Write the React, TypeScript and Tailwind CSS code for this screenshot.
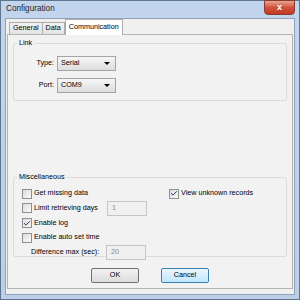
import { Check } from "lucide-react";

function Checkbox({ checked }: { checked?: boolean }) {
  return (
    <span className="flex h-[10px] w-[10px] shrink-0 items-center justify-center border border-[#8e8f8f] bg-gradient-to-br from-[#dcdcdc] to-[#fbfbfb]">
      {checked && <Check className="h-[9px] w-[9px] text-[#1c3a6b]" strokeWidth={3} />}
    </span>
  );
}

function Select({ value }: { value: string }) {
  return (
    <div className="flex h-[15px] w-[59px] items-center justify-between border border-[#a5a5a5] bg-gradient-to-b from-[#f6f6f6] to-[#dddddd] pl-[3px] pr-[5px]">
      <span>{value}</span>
      <span className="h-0 w-0 border-x-[3px] border-t-[3px] border-x-transparent border-t-black" />
    </div>
  );
}

function Field({ value }: { value: string }) {
  return (
    <div className="flex h-[15px] w-[40px] shrink-0 items-center border border-[#c5c5c5] bg-[#f0f0f0] pl-[4px] text-[#8a8a8a]">
      {value}
    </div>
  );
}

export default function App() {
  return (
    <div className="flex h-[300px] w-[300px] flex-col whitespace-nowrap border border-[#5e7591] bg-gradient-to-b from-[#c3d5ec] to-[#bccfe6] font-['Liberation_Sans',sans-serif] text-[7.2px] text-black">
      {/* title bar */}
      <div className="relative flex h-[17px] shrink-0 items-center pl-[5px]">
        <span className="text-[8.2px] text-[#1e1e1e]">Configuration</span>
        <span className="absolute right-[4px] top-[-1px] flex h-[15px] w-[31px] items-center justify-center rounded-b-[4px] border border-[#8a3b2f] bg-gradient-to-b from-[#e8a493] via-[#d0523b] to-[#c23a22] text-[9px] font-bold text-white">
          x
        </span>
      </div>

      {/* client */}
      <div className="mx-[4px] mb-[4px] flex flex-1 flex-col border border-[#8fa3bd] bg-[#f0f0f0] px-[1px] pb-[5px]">
        {/* tabs */}
        <div className="flex h-[15px] items-end pl-[2px]">
          <div className="flex h-[12px] items-center border border-b-0 border-[#adadad] bg-gradient-to-b from-[#f2f2f2] to-[#e3e3e3] px-[3px]">General</div>
          <div className="flex h-[12px] items-center border border-b-0 border-l-0 border-[#adadad] bg-gradient-to-b from-[#f2f2f2] to-[#e3e3e3] px-[3px]">Data</div>
          <div className="relative top-[1px] flex h-[16px] items-center border border-b-0 border-[#adadad] bg-white px-[3px]">Communication</div>
        </div>

        {/* panel */}
        <div className="flex flex-1 flex-col border border-[#b4b4b4] bg-[#f2f2f2] px-[5px] pt-[3px]">
          {/* Link group */}
          <fieldset className="h-[63px] rounded-[2px] border border-[#dcdcdc] px-[3px]">
            <legend className="px-[2px]">Link</legend>
            <div className="mt-[7px] flex flex-col gap-[7px]">
              <div className="flex items-center gap-[3px]">
                <span className="w-[37px] text-right">Type:</span>
                <Select value="Serial" />
              </div>
              <div className="flex items-center gap-[3px]">
                <span className="w-[37px] text-right">Port:</span>
                <Select value="COM9" />
              </div>
            </div>
          </fieldset>

          {/* Miscellaneous group */}
          <fieldset className="mt-[71px] h-[85px] rounded-[2px] border border-[#dcdcdc] px-[3px]">
            <legend className="px-[2px]">Miscellaneous</legend>
            <div className="mt-[4px] flex">
              <div className="flex w-[152px] flex-col pl-[5px]">
                <label className="flex h-[14px] items-center gap-[2px]">
                  <Checkbox />
                  Get missing data
                </label>
                <label className="flex h-[15px] items-center gap-[2px]">
                  <Checkbox />
                  <span className="w-[71px]">Limit retrieving days</span>
                  <Field value="1" />
                </label>
                <label className="flex h-[15px] items-center gap-[2px]">
                  <Checkbox checked />
                  Enable log
                </label>
                <label className="flex h-[14px] items-center gap-[2px]">
                  <Checkbox />
                  Enable auto set time
                </label>
                <div className="flex h-[15px] items-center pl-[9px]">
                  <span className="w-[75px]">Difference max (sec):</span>
                  <Field value="20" />
                </div>
              </div>
              <label className="flex h-[14px] items-center gap-[2px]">
                <Checkbox checked />
                View unknown records
              </label>
            </div>
          </fieldset>

          {/* buttons */}
          <div className="mt-[11px] flex justify-center gap-[22px]">
            <button className="h-[15px] w-[48px] rounded-[2px] border border-[#707070] bg-gradient-to-b from-[#f2f2f2] to-[#dcdcdc]">OK</button>
            <button className="h-[15px] w-[48px] rounded-[2px] border border-[#3c7fb1] bg-gradient-to-b from-[#eaf6fd] to-[#bee6fd]">Cancel</button>
          </div>
        </div>
      </div>
    </div>
  );
}
